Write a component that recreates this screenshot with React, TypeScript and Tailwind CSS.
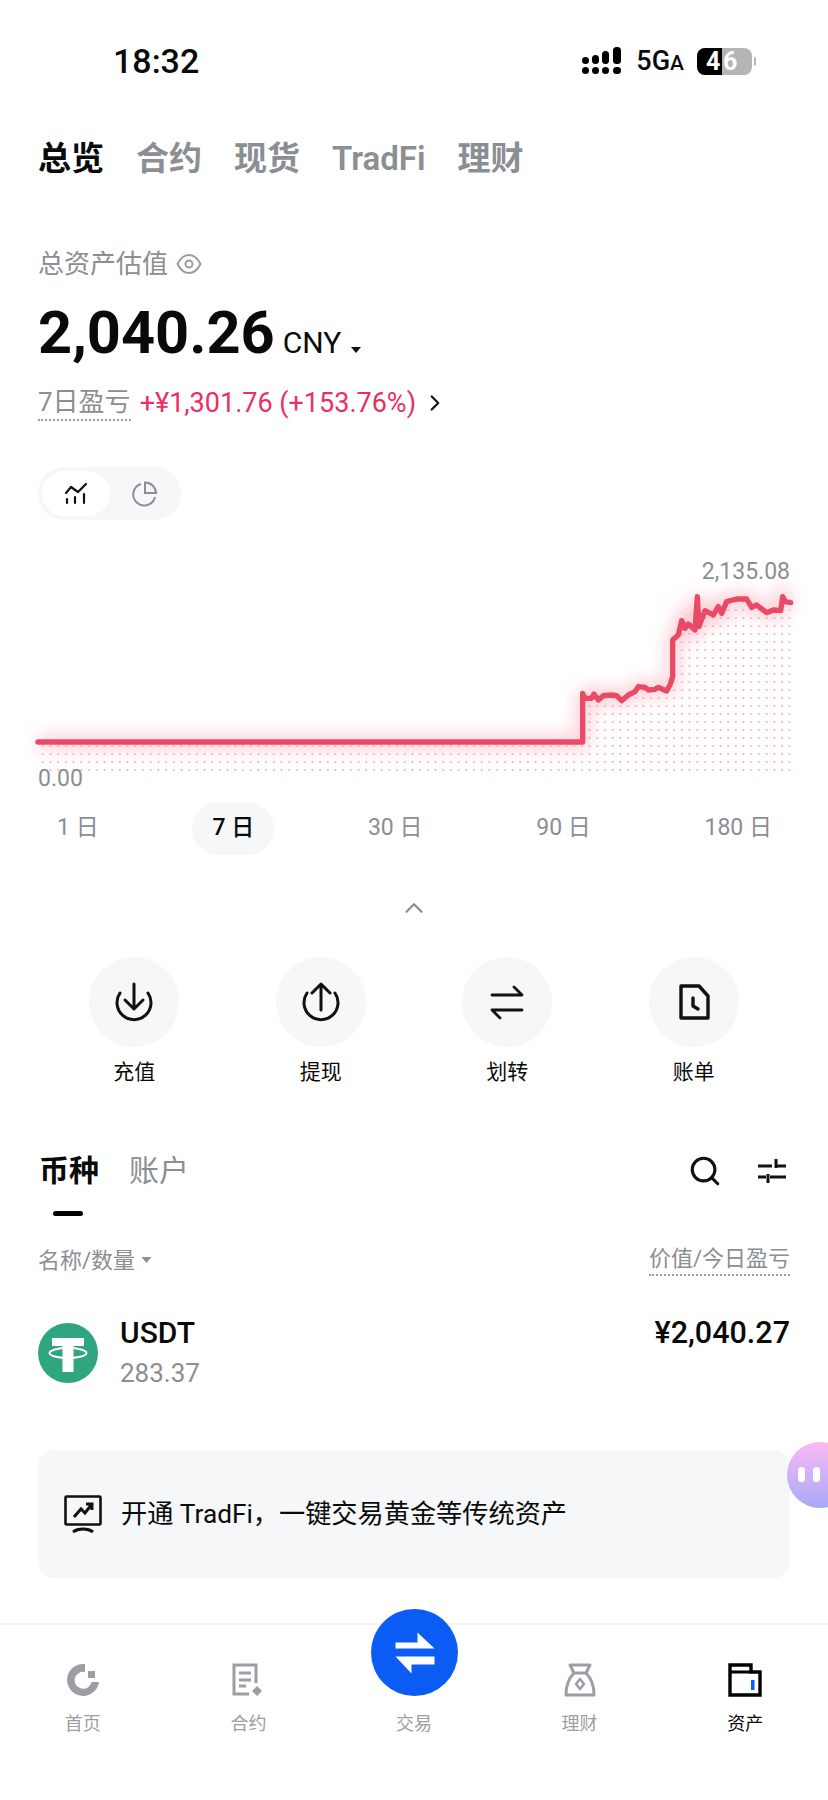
import { ChevronRight, ChevronUp, Search } from 'lucide-react';

const LINE =
  'M-1506 576 L128 576 L128 430 L135 445 L155 445 L162 432 L175 450 L190 437 L215 435 L230 437 L245 452 L265 435 L285 425 L295 410 L315 412 L325 420 L345 418 L355 412 L380 423 L390 405 L398 380 L398 270 L415 255 L425 212 L435 235 L445 222 L465 240 L472 140 L477 230 L495 182 L520 195 L535 170 L545 190 L560 155 L590 147 L620 147 L635 172 L650 165 L680 188 L700 180 L722 182 L728 140 L735 155 L752 158';

const periods = ['1 日', '7 日', '30 日', '90 日', '180 日'];

function DepositIcon() {
  return (
    <svg width="40" height="40" viewBox="0 0 40 40" fill="none" stroke="#111" strokeWidth="3" strokeLinecap="round" strokeLinejoin="round">
      <path d="M6 11 A17 17 0 1 0 34 11" />
      <path d="M20 2 V27 M11 18 L20 27 L29 18" />
    </svg>
  );
}

function WithdrawIcon() {
  return (
    <svg width="40" height="40" viewBox="0 0 40 40" fill="none" stroke="#111" strokeWidth="3" strokeLinecap="round" strokeLinejoin="round">
      <path d="M6 11 A17 17 0 1 0 34 11" />
      <path d="M20 28 V2 M11 11 L20 2 L29 11" />
    </svg>
  );
}

function TransferIcon() {
  return (
    <svg width="40" height="40" viewBox="0 0 40 40" fill="none" stroke="#111" strokeWidth="2.8" strokeLinecap="round" strokeLinejoin="round">
      <path d="M5 13 H35 L27 5" />
      <path d="M35 28 H5 L13 36" />
    </svg>
  );
}

function BillIcon() {
  return (
    <svg width="40" height="40" viewBox="0 0 40 40" fill="none" stroke="#111" strokeWidth="3.4" strokeLinejoin="round" strokeLinecap="round">
      <path d="M7 4 H25 L34 14 V36 H7 Z" />
      <path d="M19 16 V24 L24 27" />
    </svg>
  );
}

const actions = [
  { label: '充值', icon: <DepositIcon /> },
  { label: '提现', icon: <WithdrawIcon /> },
  { label: '划转', icon: <TransferIcon /> },
  { label: '账单', icon: <BillIcon /> },
];

function HomeIcon() {
  return (
    <svg width="34" height="34" viewBox="0 0 34 34" fill="none">
      <path d="M19 1 V9 A8.5 8.5 0 1 0 25.5 19 H33 A16 16 0 1 1 19 1 Z" fill="#9b9ea2" />
      <path d="M22 8 H29 V15 H22 Z" fill="#9b9ea2" />
    </svg>
  );
}

function ContractIcon() {
  return (
    <svg width="34" height="34" viewBox="0 0 34 34" fill="none" stroke="#9b9ea2" strokeWidth="3">
      <path d="M25 20 V2 H3 V31 H18" />
      <path d="M8 10 H20 M8 17 H20 M8 23 H15" />
      <path d="M26 23 L31 28 L26 33 L21 28 Z" fill="#9b9ea2" stroke="none" />
    </svg>
  );
}

function EarnIcon() {
  return (
    <svg width="34" height="34" viewBox="0 0 34 34" fill="none" stroke="#9b9ea2" strokeWidth="3" strokeLinejoin="round">
      <path d="M7 2 H27 L23 10 H11 Z" />
      <path d="M11 10 C6 15 3 22 3 32 H31 C31 22 28 15 23 10" />
      <path d="M17 16 L21 21 L17 26 L13 21 Z" strokeWidth="2.5" />
    </svg>
  );
}

function AssetIcon() {
  return (
    <svg width="34" height="34" viewBox="0 0 34 34" fill="none">
      <path d="M2 2 H23 V9 H32 V32 H2 Z" stroke="#000" strokeWidth="3.4" />
      <path d="M2 9 H23" stroke="#000" strokeWidth="3" />
      <rect x="23" y="17" width="3.5" height="10" fill="#0a5cf5" />
    </svg>
  );
}

const navItems = [
  { label: '首页', icon: <HomeIcon />, active: false },
  { label: '合约', icon: <ContractIcon />, active: false },
  { label: '交易', icon: <div className="h-[34px] w-[34px]" />, active: false },
  { label: '理财', icon: <EarnIcon />, active: false },
  { label: '资产', icon: <AssetIcon />, active: true },
];

export default function App() {
  return (
    <div className="relative h-[1800px] w-[828px] overflow-hidden bg-white font-['Roboto','Noto_Sans_CJK_SC',sans-serif] text-[#0a0a0a]">
      {/* status bar */}
      <div className="flex h-[122px] items-center justify-between pl-[113px] pr-[72px]">
        <span className="text-[34px] font-medium">18:32</span>
        <div className="flex items-center">
          <svg width="42" height="30" viewBox="0 0 42 30" fill="#000">
            <rect x="1" y="11" width="7" height="7" rx="3.5" />
            <rect x="11" y="9" width="7" height="9" rx="3.5" />
            <rect x="21" y="5" width="7" height="13" rx="3.5" />
            <rect x="32" y="1" width="8" height="17" rx="3.5" />
            <rect x="1" y="21" width="7" height="7" rx="3.5" />
            <rect x="11" y="21" width="7" height="7" rx="3.5" />
            <rect x="21" y="21" width="7" height="7" rx="3.5" />
            <rect x="32" y="21" width="8" height="7" rx="3.5" />
          </svg>
          <span className="ml-[13px] text-[27px] leading-none font-medium">
            5G<span className="text-[21px]">A</span>
          </span>
          <div className="ml-[13px] flex h-[27px] w-[55px] overflow-hidden rounded-[8px] bg-[#b5b5b5] text-[25px] leading-[27px] font-bold text-white">
            <span className="w-[25px] bg-black pl-[9px]">4</span>
            <span className="pl-[1px]">6</span>
          </div>
          <div className="ml-[2px] h-[9px] w-[2px] rounded-r-full bg-[#b5b5b5]" />
        </div>
      </div>

      {/* top tabs */}
      <div className="flex h-[72px] items-center gap-[32px] pl-[38px] text-[33px] leading-none font-semibold text-[#8b8e92]">
        <span className="text-[#0a0a0a]">总览</span>
        <span>合约</span>
        <span>现货</span>
        <span>TradFi</span>
        <span>理财</span>
      </div>

      {/* total */}
      <div className="mt-[50px] flex h-[40px] items-center pl-[38px] text-[26px] text-[#8b8e92]">
        总资产估值
        <svg className="ml-[8px]" width="26" height="22" viewBox="0 0 26 22" fill="none" stroke="#9a9da1" strokeWidth="2">
          <path d="M1.5 11 C5 4 9 2 13 2 C17 2 21 4 24.5 11 C21 18 17 20 13 20 C9 20 5 18 1.5 11 Z" />
          <circle cx="13" cy="11" r="3.5" />
        </svg>
      </div>
      <div className="mt-[18px] flex h-[62px] items-baseline pl-[38px]">
        <span className="text-[59.5px] leading-[62px] font-bold">2,040.26</span>
        <span className="ml-[8px] text-[30px] font-normal">CNY</span>
        <svg className="mb-[10px] ml-[9px] self-end" width="12" height="8" viewBox="0 0 12 8" fill="#111">
          <path d="M1 1 H11 L6 7 Z" />
        </svg>
      </div>
      <div className="mt-[19px] flex h-[40px] items-center pl-[38px] text-[26px]">
        <span className="border-b-2 border-dotted border-[#9a9da1] leading-[34px] text-[#8b8e92]">7日盈亏</span>
        <span className="ml-[9px] text-[27px] text-[#ec2f63]">+¥1,301.76 (+153.76%)</span>
        <ChevronRight className="ml-[6px]" size={26} color="#111" strokeWidth={2} />
      </div>

      {/* chart type toggle */}
      <div className="mt-[44px] ml-[38px] flex h-[53px] w-[143px] items-center rounded-full bg-[#f5f7f8] px-[4px]">
        <div className="flex h-[45px] w-[68px] items-center justify-center rounded-full bg-white">
          <svg width="24" height="24" viewBox="0 0 24 24" fill="none" stroke="#111" strokeWidth="2.2" strokeLinecap="round" strokeLinejoin="round">
            <path d="M2 11 L7 5 L14 10 L22 2" />
            <path d="M3 17 V21 M11 15 V21 M20 12 V21" />
          </svg>
        </div>
        <div className="flex flex-1 items-center justify-center">
          <svg width="26" height="26" viewBox="0 0 26 26" fill="none" stroke="#8b8e92" strokeWidth="2">
            <path d="M10 3 A11 11 0 1 0 24 16" />
            <path d="M14 1.5 A11 11 0 0 1 25 12 H14 Z" />
          </svg>
        </div>
      </div>

      {/* chart */}
      <div className="relative mt-[20px] h-[262px]">
        <svg className="block" width="828" height="262" viewBox="0 540 828 262" fill="none">
          <defs>
            <pattern id="dots" x="0" y="0" width="23.1" height="24" patternUnits="userSpaceOnUse">
              <circle cx="10" cy="12" r="3" fill="#f6a3b6" />
            </pattern>
            <clipPath id="below">
              <path d={`${LINE} L752 666 L-1506 666 Z`} />
            </clipPath>
            <filter id="glow" x="-10%" y="-40%" width="120%" height="180%">
              <feGaussianBlur stdDeviation="26" />
            </filter>
          </defs>
          <g transform="translate(540 550) scale(0.33333)">
            <path d={LINE} stroke="#f7697f" strokeOpacity="0.4" strokeWidth="34" filter="url(#glow)" />
            <rect x="-1506" y="0" width="2258" height="666" fill="url(#dots)" clipPath="url(#below)" />
            <path d={LINE} stroke="#ea4a66" strokeWidth="16" strokeLinecap="round" strokeLinejoin="round" />
          </g>
        </svg>
        <span className="absolute top-[21px] right-[38px] text-[23px] leading-[22px] text-[#8b8e92]">2,135.08</span>
        <span className="absolute top-[228px] left-[38px] text-[23px] leading-[22px] text-[#8b8e92]">0.00</span>
      </div>

      {/* period tabs */}
      <div className="flex h-[53px] items-center justify-between pr-[36px] pl-[37px] text-[23px] text-[#8b8e92]">
        {periods.map((p) => (
          <span
            key={p}
            className={`flex h-[53px] items-center rounded-full px-[20px] ${p === '7 日' ? 'bg-[#f5f7f8] font-medium text-[#0a0a0a]' : ''}`}
          >
            {p}
          </span>
        ))}
      </div>

      <div className="mt-[38px] flex justify-center">
        <ChevronUp size={30} color="#8b8e92" strokeWidth={1.8} />
      </div>

      {/* actions */}
      <div className="mt-[34px] grid grid-cols-4 px-[41px]">
        {actions.map((a) => (
          <div key={a.label} className="flex flex-col items-center">
            <div className="flex h-[90px] w-[90px] items-center justify-center rounded-full bg-[#f5f7f8]">{a.icon}</div>
            <span className="mt-[10px] text-[21px] leading-[30px]">{a.label}</span>
          </div>
        ))}
      </div>

      {/* list tabs */}
      <div className="mt-[59px] flex h-[50px] items-center justify-between pr-[41px] pl-[39px]">
        <div className="flex items-center gap-[30px] text-[30px] leading-none font-semibold">
          <span>币种</span>
          <span className="font-normal text-[#8b8e92]">账户</span>
        </div>
        <div className="flex items-center gap-[35px]">
          <Search size={34} color="#111" strokeWidth={2.2} />
          <svg width="30" height="26" viewBox="0 0 30 26" fill="none" stroke="#111" strokeWidth="3">
            <path d="M1 8 H15 M19 8 H29 M19 1 V10 M1 19 H9 M13 19 H29 M11 16 V25" />
          </svg>
        </div>
      </div>
      <div className="mt-[15px] ml-[53px] h-[5px] w-[30px] rounded-full bg-black" />

      {/* column heads */}
      <div className="mt-[28px] flex h-[32px] items-center justify-between pr-[38px] pl-[38px] text-[22px] text-[#8b8e92]">
        <div className="flex items-center">
          名称/数量
          <svg className="ml-[6px]" width="11" height="8" viewBox="0 0 11 8" fill="#8b8e92">
            <path d="M0.5 1 H10.5 L5.5 7 Z" />
          </svg>
        </div>
        <span className="border-b-2 border-dotted border-[#9a9da1] leading-[30px]">价值/今日盈亏</span>
      </div>

      {/* coin row */}
      <div className="mt-[35px] flex items-center justify-between pr-[38px] pl-[38px]">
        <div className="flex items-center">
          <svg width="60" height="60" viewBox="0 0 60 60">
            <circle cx="30" cy="30" r="30" fill="#2fa67f" />
            <path d="M14 15 H46 V23 H35.5 V49 H24.5 V23 H14 Z" fill="#fff" />
            <ellipse cx="30" cy="30" rx="18.5" ry="5" fill="none" stroke="#fff" strokeWidth="2" />
          </svg>
          <div className="mt-[3px] ml-[22px] flex flex-col">
            <span className="text-[30px] leading-[38px] font-medium">USDT</span>
            <span className="text-[26px] leading-[42px] text-[#8b8e92]">283.37</span>
          </div>
        </div>
        <span className="-mt-[40px] text-[30.5px] font-medium">¥2,040.27</span>
      </div>

      {/* banner */}
      <div className="mt-[56px] ml-[38px] flex h-[128px] w-[752px] items-center rounded-[16px] bg-[#f5f7f8] pl-[26px]">
        <svg width="38" height="38" viewBox="0 0 38 38" fill="none" stroke="#111" strokeWidth="2.6">
          <rect x="1.5" y="1.5" width="35" height="28" rx="1" />
          <path d="M10 22 L17 14 L21 18 L28 9 M22 9 H28 V15" strokeWidth="3" />
          <path d="M9 37 C14 33 24 33 29 37" strokeWidth="3" />
        </svg>
        <span className="ml-[19px] text-[26.2px] leading-none">开通 TradFi，一键交易黄金等传统资产</span>
      </div>

      {/* floating helper, sits over the page edge */}
      <div className="absolute top-[1442px] left-[787px] h-[66px] w-[66px] rounded-full bg-gradient-to-b from-[#f9b9f3] to-[#a8a8f6]">
        <div className="absolute top-[25px] left-[11px] h-[15px] w-[7px] rounded-full bg-white" />
        <div className="absolute top-[25px] left-[26px] h-[15px] w-[7px] rounded-full bg-white" />
      </div>

      {/* bottom nav */}
      <div className="absolute right-0 bottom-0 left-0 h-[177px] border-t-2 border-[#f3f4f5] bg-white">
        <div className="grid grid-cols-5 pt-[38px]">
          {navItems.map((n) => (
            <div key={n.label} className="flex flex-col items-center">
              {n.icon}
              <span className={`mt-[14px] text-[18px] leading-[26px] ${n.active ? 'text-[#0a0a0a]' : 'text-[#9b9ea2]'}`}>{n.label}</span>
            </div>
          ))}
        </div>
      </div>
      <div className="absolute top-[1609px] left-[371px] flex h-[87px] w-[87px] items-center justify-center rounded-full bg-[#0a5cf5]">
        <svg width="44" height="46" viewBox="0 0 44 46" fill="#fff">
          <path d="M24.5 2.5 L41.5 18.5 H2.5 V12.5 H24.5 Z" />
          <path d="M2.5 26.5 H41.5 V34.5 H18.5 V43.5 Z" />
        </svg>
      </div>
    </div>
  );
}
